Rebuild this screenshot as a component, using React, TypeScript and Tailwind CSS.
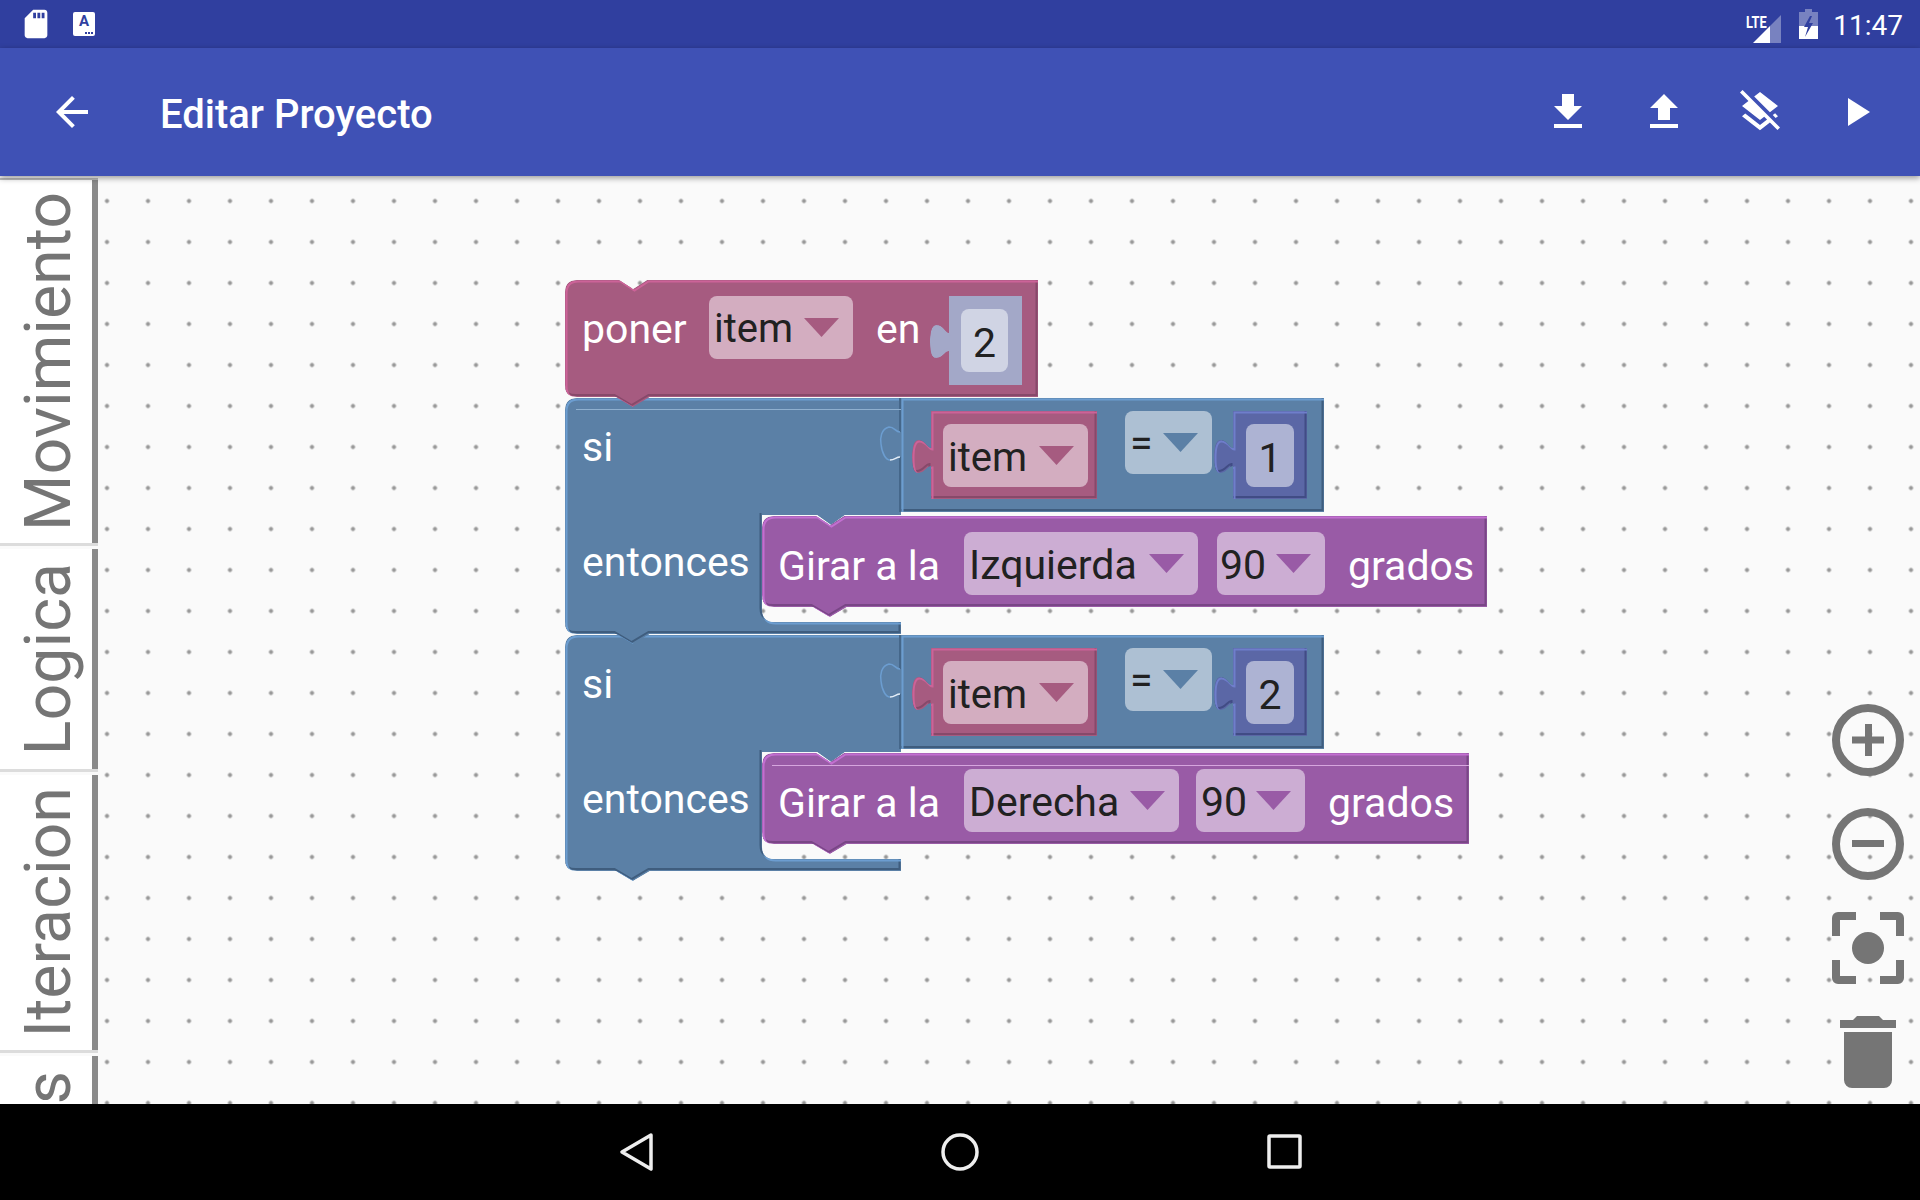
import type { ReactNode } from "react";

type Palette = { base: string; light: string; dark: string };

const PINK: Palette = { base: "#a65b80", light: "#cc6398", dark: "#87496a" };
const BLUE: Palette = { base: "#5b80a6", light: "#6c9dd0", dark: "#3f5d7e" };
const PURPLE: Palette = { base: "#995ba6", light: "#c26fd0", dark: "#794686" };
const INDIGO: Palette = { base: "#5b67a6", light: "#6f7ecb", dark: "#414c85" };
const SOCKET: Palette = { base: "#a3a8c8", light: "#a3a8c8", dark: "#a3a8c8" };

const r = 12;

// statement block: notch on top, tab under it
const stackPath = (w: number, h: number) =>
  `M0 ${r} Q0 0 ${r} 0 H54 L68 9 L82 0 H${w} V${h} H85 L68 ${h + 10} L51 ${h} H${r} Q0 ${h} 0 ${h - r} Z`;

// value block: rectangle with a puzzle tab on the left
const valuePath = (w: number, h: number) =>
  `M0 0 H${w} V${h} H0 V55 C-4 55 -6 62 -13 62 C-18 62 -19 52 -19 45.5 C-19 39 -18 29 -13 29 C-6 29 -4 37 0 37 Z`;

// the "si" body, a C shape open to the right
const ifPath = (h: number) =>
  `M0 ${r} Q0 0 ${r} 0 H336 V117 H280 L266 127 L252 117 H197 V${h - 24} Q197 ${h - 12} 209 ${h - 12} H336 V${h} H85 L68 ${h + 10} L51 ${h} H${r} Q0 ${h} 0 ${h - r} Z`;

// same outline without the inner top edge, which the nested block hides
const ifEdge = (h: number) =>
  `M197 117 V${h - 24} Q197 ${h - 12} 209 ${h - 12} H336 V${h} H85 L68 ${h + 10} L51 ${h} H${r} Q0 ${h} 0 ${h - r} V${r} Q0 0 ${r} 0 H336`;

function Shape({ id, d, edge, color, w, h }: { id: string; d: string; edge?: string; color: Palette; w: number; h: number }) {
  const line = edge ?? d;
  return (
    <svg width={w} height={h} className="absolute left-0 top-0 overflow-visible">
      <clipPath id={id}>
        <path d={d} />
      </clipPath>
      <g clipPath={`url(#${id})`}>
        <path d={d} fill={color.base} />
        <path d={line} fill="none" stroke={color.dark} strokeWidth="2" transform="translate(-1.5 -2)" />
        <path d={line} fill="none" stroke={color.light} strokeWidth="2" transform="translate(1.5 1.5)" />
      </g>
    </svg>
  );
}

function Arrow({ color }: { color: string }) {
  return (
    <svg width="35" height="19" viewBox="0 0 35 19" className="shrink-0">
      <polygon points="0,0 35,0 17.5,19" fill={color} />
    </svg>
  );
}

function Dropdown({ label, bg, color, className, textClass }: { label: string; bg: string; color: string; className: string; textClass: string }) {
  return (
    <div style={{ backgroundColor: bg }} className={`flex h-[63px] shrink-0 items-center justify-between rounded-lg pr-[14px] text-[#212121] ${className}`}>
      <span className={textClass}>{label}</span>
      <Arrow color={color} />
    </div>
  );
}

function NumberField({ value, bg, className }: { value: string; bg: string; className: string }) {
  return (
    <div style={{ backgroundColor: bg }} className={`flex h-[63px] items-center justify-center rounded-lg pt-[5px] text-[#212121] ${className}`}>
      {value}
    </div>
  );
}

function ItemBlock({ id }: { id: string }) {
  return (
    <div className="relative h-[88px] w-[166px] shrink-0">
      <Shape id={id} d={valuePath(166, 88)} color={PINK} w={166} h={88} />
      <div className="relative pl-[12px] pt-[13px]">
        <Dropdown label="item" bg="#d3adc0" color={PINK.base} className="w-[145px] pl-[5px] text-[40px]" textClass="pt-[5px]" />
      </div>
    </div>
  );
}

function NumberBlock({ id, value }: { id: string; value: string }) {
  return (
    <div className="relative ml-[21px] h-[88px] w-[74px] shrink-0">
      <Shape id={id} d={valuePath(74, 88)} color={INDIGO} w={74} h={88} />
      <div className="relative pl-[13px] pt-[13px]">
        <NumberField value={value} bg="#adb3d3" className="w-[48px]" />
      </div>
    </div>
  );
}

function TurnBlock({ id, dir, w, dirClass, angleClass, line }: { id: string; dir: string; w: number; dirClass: string; angleClass: string; line?: boolean }) {
  return (
    <div className="relative h-[91px] shrink-0" style={{ width: w }}>
      <Shape id={id} d={stackPath(w, 91)} color={PURPLE} w={w} h={91} />
      {line && <div className="absolute left-[10px] right-0 top-[12px] h-px bg-[#d6a6de]" />}
      <div className="relative flex items-center pl-[16px] pt-[16px] text-white">
        <span className="w-[186px] pt-[5px]">Girar a la</span>
        <Dropdown label={dir} bg="#ccadd3" color={PURPLE.base} className={`pl-[5px] ${dirClass}`} textClass="pt-[3px]" />
        <Dropdown label="90" bg="#ccadd3" color={PURPLE.base} className={angleClass} textClass="pt-[3px]" />
        <span className="ml-[23px] pt-[5px]">grados</span>
      </div>
    </div>
  );
}

function IfBlock({ n, value, children, line, className }: { n: string; value: string; children: ReactNode; line?: boolean; className: string }) {
  return (
    <div className={`relative h-[237px] ${className}`}>
      <Shape id={`if-${n}`} d={ifPath(236)} edge={ifEdge(236)} color={BLUE} w={336} h={236} />
      <Shape id={`if-right-${n}`} d="M336 0 H759 V114 H336 Z" color={BLUE} w={759} h={114} />
      <svg width="340" height="114" className="absolute left-0 top-0 overflow-visible">
        <path d="M335 0 V34 M335 59 V114" stroke="#45678a" strokeWidth="2" fill="none" />
        <path d="M335 34 C330 34 330 29 324 29 C316 31 315 40 316 46 C317 56 321 62 325 62" stroke="#6c9dd0" strokeWidth="1.5" fill="none" />
        <path d="M325 62 C330 62 331 59 335 59" stroke="#e4eef8" strokeWidth="1.5" fill="none" />
      </svg>
      {line && <div className="absolute left-[11px] top-[11px] h-px w-[325px] bg-[#8fb0cf]" />}
      <div className="relative flex h-[118px] items-start pt-[13px]">
        <span className="mt-[16px] w-[366px] pl-[17px] text-white">si</span>
        <ItemBlock id={`item-${n}`} />
        <div className="ml-[28px] flex h-[63px] w-[87px] shrink-0 items-center justify-between rounded-lg bg-[#adc0d3] pl-[5px] pr-[14px] text-[#212121]">
          <span>=</span>
          <Arrow color={BLUE.base} />
        </div>
        <NumberBlock id={`num-${n}`} value={value} />
      </div>
      <div className="relative flex items-start">
        <span className="mt-[26px] w-[197px] pl-[17px] text-white">entonces</span>
        {children}
      </div>
    </div>
  );
}

function SetBlock() {
  return (
    <div className="relative z-30 h-[118px]">
      <Shape id="set" d={stackPath(473, 117)} color={PINK} w={473} h={117} />
      <div className="relative flex items-start pl-[17px] pt-[16px] text-white">
        <span className="mt-[13px] w-[127px]">poner</span>
        <Dropdown label="item" bg="#d3adc0" color={PINK.base} className="w-[144px] pl-[5px] text-[40px]" textClass="pt-[3px]" />
        <span className="ml-[23px] mt-[13px] w-[73px]">en</span>
        <div className="relative h-[89px] w-[73px]">
          <Shape id="set-socket" d={valuePath(73, 89)} color={SOCKET} w={73} h={89} />
          <div className="relative pl-[12px] pt-[13px]">
            <NumberField value="2" bg="#d0d4e4" className="w-[47px]" />
          </div>
        </div>
      </div>
    </div>
  );
}

function SideTab({ label, className }: { label: string; className: string }) {
  return (
    <div className={`flex flex-col items-center border-r-[6px] border-[#8a8a8a] bg-white pl-[4px] ${className}`}>
      <span className="rotate-180 text-[64.5px] leading-[64px] text-[#757575] [writing-mode:vertical-rl]">{label}</span>
    </div>
  );
}

function Separator() {
  return <div className="h-[6px] border-t-[3px] border-[#dcdcdc] bg-[#fafafa]" />;
}

function ToolbarIcon({ d }: { d: string }) {
  return (
    <svg width="48" height="48" viewBox="0 0 24 24" fill="#fff">
      <path d={d} />
    </svg>
  );
}

function StatusBar() {
  return (
    <div className="flex h-12 shrink-0 items-center bg-[#303f9f] pl-[19px] pr-[17px]">
      <svg width="34" height="34" viewBox="0 0 24 24" fill="#fff">
        <path d="M18 2h-8L4.02 8 4 20c0 1.1.9 2 2 2h12c1.1 0 2-.9 2-2V4c0-1.1-.9-2-2-2zm-6 6h-2V4h2v4zm3 0h-2V4h2v4zm3 0h-2V4h2v4z" />
      </svg>
      <div className="relative ml-[20px] h-[24px] w-[22px] rounded-[2px] bg-white">
        <span className="absolute inset-x-0 top-[1px] text-center text-[15px] font-bold leading-[16px] text-[#303f9f]">A</span>
        <div className="absolute bottom-[2px] right-[2px] flex gap-px">
          <div className="size-[2px] bg-[#303f9f]" />
          <div className="size-[2px] bg-[#303f9f]" />
          <div className="size-[2px] bg-[#303f9f]" />
        </div>
      </div>
      <div className="flex-1" />
      <div className="relative h-[38px] w-[36px]">
        <span className="absolute left-0 top-[10px] origin-left scale-x-[0.8] text-[16px] font-bold leading-[16px] text-white">LTE</span>
        <svg width="36" height="38" viewBox="0 0 36 38" className="absolute left-0 top-0">
          <polygon points="24,21 35,10 35,38 24,38" fill="#fff" fillOpacity="0.35" />
          <polygon points="7,38 24,21 24,38" fill="#fff" />
        </svg>
      </div>
      <svg width="20" height="30" viewBox="0 0 20 30" className="ml-[17px]">
        <path d="M6 0h7v3h6v27H0V3h6z" fill="#fff" fillOpacity="0.35" />
        <path d="M0 17h19v13H0z" fill="#fff" />
        <path d="M11 7 L5 18 H9 L6 28 L14 14 H10 L13 7 Z" fill="#303f9f" />
      </svg>
      <span className="ml-[14px] pt-1 text-[28px] leading-none text-white">11:47</span>
    </div>
  );
}

function AppBar() {
  return (
    <div className="relative z-10 flex h-32 shrink-0 items-center bg-[#3f51b5] pl-12 pr-10 shadow-[0_2px_6px_rgba(0,0,0,0.4)]">
      <ToolbarIcon d="M20 11H7.83l5.59-5.59L12 4l-8 8 8 8 1.41-1.41L7.83 13H20v-2z" />
      <span className="ml-[64px] pt-[6px] text-[40px] font-medium leading-none text-white">Editar Proyecto</span>
      <div className="ml-auto flex gap-12">
        <ToolbarIcon d="M19 9h-4V3H9v6H5l7 7 7-7zM5 18v2h14v-2H5z" />
        <ToolbarIcon d="M9 16h6v-6h4l-7-7-7 7h4zm-4 2h14v2H5z" />
        <ToolbarIcon d="M19.81 14.99l1.19-.92-1.43-1.43-1.19.92 1.43 1.43zm-.45-4.72L21 9l-9-7-2.91 2.27 7.87 7.88 2.4-1.88zM3.27 1L2 2.27l4.22 4.22L3 9l1.63 1.27L12 16l2.1-1.63 1.43 1.43L12 18.54l-7.37-5.73L3 14.07l9 7 4.95-3.85L20.73 21 22 19.73 3.27 1z" />
        <ToolbarIcon d="M8 5v14l11-7z" />
      </div>
    </div>
  );
}

function CanvasTools() {
  return (
    <div className="absolute right-[16px] top-[528px] flex flex-col gap-[32px]">
      <svg width="72" height="72" viewBox="0 0 72 72" fill="#757575">
        <circle cx="36" cy="36" r="32" fill="none" stroke="#757575" strokeWidth="8" />
        <path d="M20 32.5h13V20h7v12.5h12v7H40V52h-7V39.5H20z" />
      </svg>
      <svg width="72" height="72" viewBox="0 0 72 72" fill="#757575">
        <circle cx="36" cy="36" r="32" fill="none" stroke="#757575" strokeWidth="8" />
        <path d="M20 32h32v7H20z" />
      </svg>
      <svg width="72" height="72" viewBox="0 0 72 72" fill="#757575">
        <circle cx="36" cy="36" r="16" />
        <path d="M0 24V6a6 6 0 0 1 6-6h18v8H8v16zM48 0h18a6 6 0 0 1 6 6v18h-8V8H48zM0 48h8v16h16v8H6a6 6 0 0 1-6-6zM64 48h8v18a6 6 0 0 1-6 6H48v-8h16z" />
      </svg>
      <svg width="72" height="72" viewBox="0 0 72 72" fill="#757575">
        <path d="M8 4h13l4-4h22l4 4h13v8H8zM12 16h48v48a8 8 0 0 1-8 8H20a8 8 0 0 1-8-8z" />
      </svg>
    </div>
  );
}

export default function App() {
  return (
    <div className="flex h-[1200px] w-[1920px] flex-col overflow-hidden bg-black font-['Roboto',sans-serif]">
      <StatusBar />
      <AppBar />
      <div className="flex h-[928px] shrink-0">
        <div className="flex w-[98px] shrink-0 flex-col bg-[#fafafa] pt-[2px]">
          <div className="border-t-2 border-[#bdbdbd]" />
          <SideTab label="Movimiento" className="h-[363px] justify-center" />
          <Separator />
          <SideTab label="Logica" className="h-[220px] justify-center" />
          <Separator />
          <SideTab label="Iteracion" className="h-[275px] justify-center" />
          <Separator />
          <SideTab label="s" className="h-[48px] justify-end" />
        </div>
        <div className="relative flex-1 bg-[#fafafa] bg-[radial-gradient(circle,#999999_1.8px,transparent_2.4px)] bg-[size:41px_41px] bg-[position:-11.5px_4.5px] text-[41px] leading-[40px]">
          <div className="absolute left-[467px] top-[104px] flex w-[930px] flex-col">
            <SetBlock />
            <IfBlock n="a" value="1" line className="z-20">
              <TurnBlock id="turn-a" dir="Izquierda" w={725} dirClass="w-[234px]" angleClass="ml-[19px] w-[108px] pl-[3px]" />
            </IfBlock>
            <IfBlock n="b" value="2" className="z-10">
              <TurnBlock id="turn-b" dir="Derecha" w={707} dirClass="w-[215px]" angleClass="ml-[17px] w-[109px] pl-[5px]" line />
            </IfBlock>
          </div>
          <CanvasTools />
        </div>
      </div>
      <div className="h-[96px] shrink-0">
        <svg width="1920" height="96" viewBox="0 0 1920 96" fill="none" stroke="#eeeeee" strokeWidth="3.5" strokeLinejoin="round">
          <polygon points="651,31 622,48 651,65" />
          <circle cx="960" cy="48" r="17" />
          <rect x="1269" y="32" width="31" height="31" rx="1" />
        </svg>
      </div>
    </div>
  );
}
